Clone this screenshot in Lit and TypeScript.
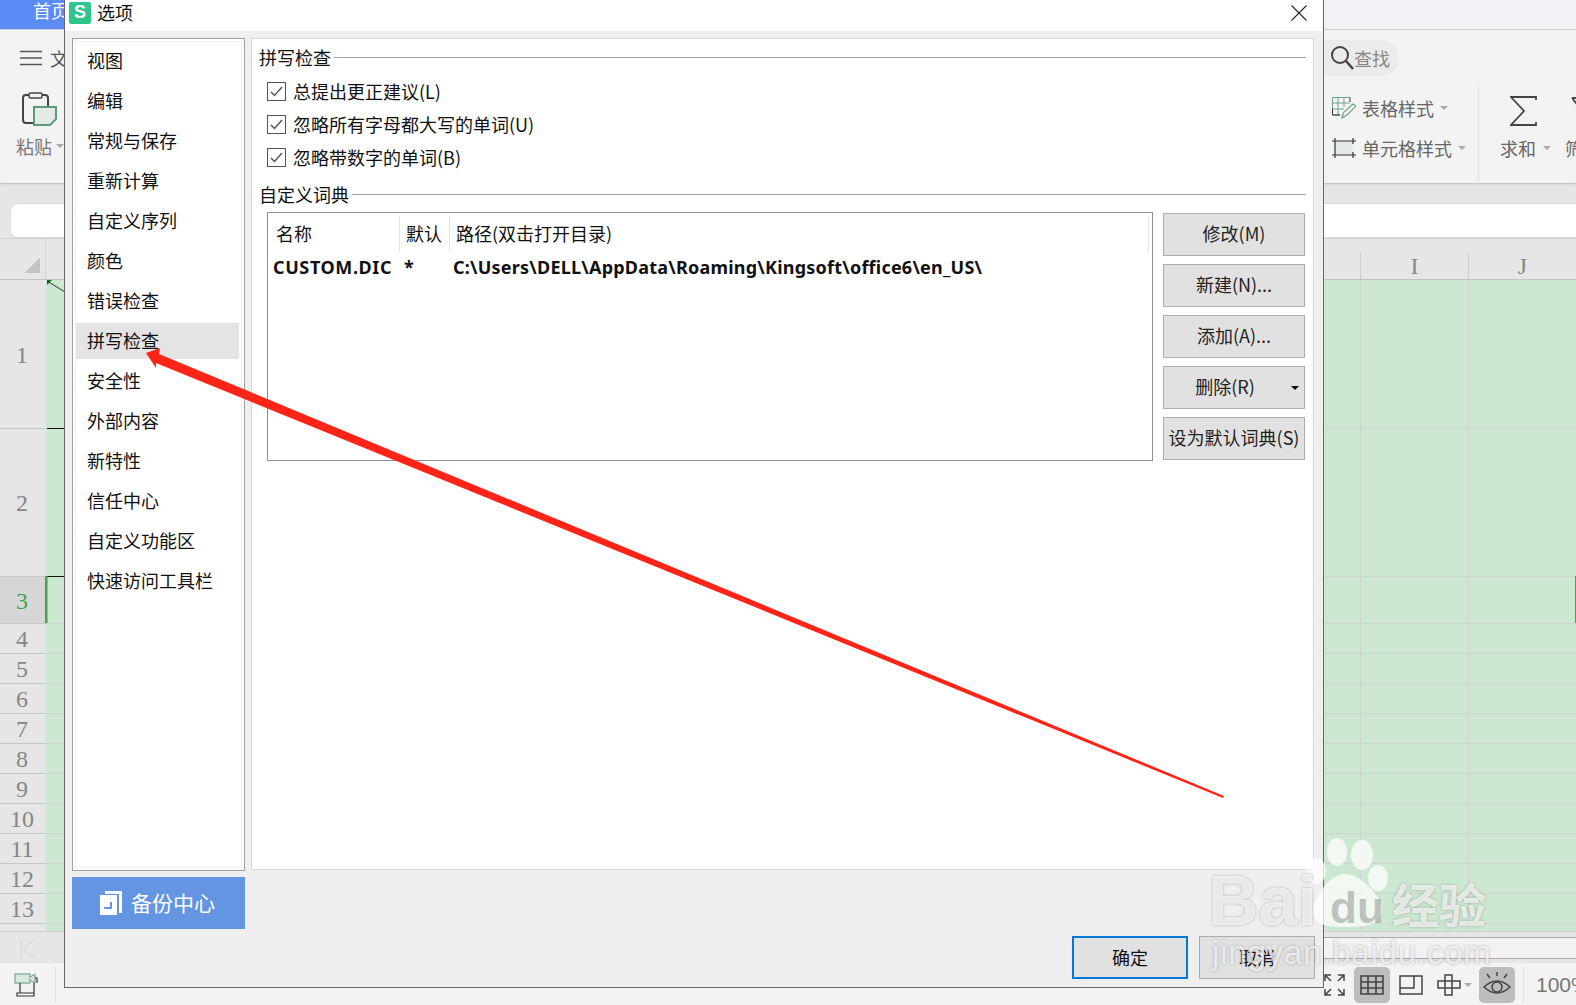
import { LitElement, html, css, svg } from "lit";
import { customElement } from "lit/decorators.js";

const NAV = ["视图","编辑","常规与保存","重新计算","自定义序列","颜色","错误检查","拼写检查","安全性","外部内容","新特性","信任中心","自定义功能区","快速访问工具栏"];
const ROWS: [string, number][] = [["1",149],["2",148],["3",47],["4",30],["5",30],["6",30],["7",30],["8",30],["9",30],["10",30],["11",30],["12",30],["13",30],["",8]];
const CHECKS = ["总提出更正建议(L)","忽略所有字母都大写的单词(U)","忽略带数字的单词(B)"];

@customElement("app-root")
export class AppRoot extends LitElement {
  static styles = css`
    :host { display:block; position:relative; width:1576px; height:1005px; overflow:hidden; background:#f3f3f3;
      font-family:"Noto Sans CJK SC","Liberation Sans",sans-serif; font-size:18px; color:#111; }
    svg { display:block; flex:none; }
    .tabs { height:29px; background:#f0f2f6; border-bottom:1px solid #cfd3e0; display:flex; }
    .home { width:64px; background:#5b8cf5; color:#fff; padding-left:33px; box-sizing:border-box; line-height:21px; overflow:hidden; white-space:nowrap; }
    .ribbon { height:153px; background:#f3f3f3; display:grid; grid-template-columns:64px 1259px 1fr; box-shadow:0 1px 3px rgba(0,0,0,.12); position:relative; }
    .rleft { display:flex; flex-direction:column; padding:20px 0 0 20px; overflow:hidden; }
    .menu { display:flex; align-items:center; gap:8px; height:16px; color:#555; white-space:nowrap; }
    .paste { margin:26px 0 0 2px; }
    .pastelbl { margin:7px 0 0 -4px; display:flex; align-items:center; gap:4px; color:#777; white-space:nowrap; height:22px; }
    .caret { width:0; height:0; border:4px solid transparent; border-top:4px solid #aaa; border-bottom:0; flex:none; }
    .rright { display:flex; flex-direction:column; overflow:hidden; }
    .search { width:76px; height:36px; margin-top:10px; box-sizing:border-box; background:#ebebeb; border-radius:0 18px 18px 0; display:flex; align-items:center; gap:0; padding-left:7px; color:#888; line-height:34px; }
    .rtools { display:flex; margin-top:10px; }
    .styles { width:155px; flex:none; box-sizing:border-box; padding:10px 0 0 9px; display:flex; flex-direction:column; gap:16px; color:#666; }
    .sty { display:flex; align-items:center; gap:6px; height:24px; white-space:nowrap; }
    .rdiv { width:1px; height:95px; background:#e2e2e2; flex:none; }
    .sum { margin-left:21px; width:65px; flex:none; display:flex; flex-direction:column; padding-top:10px; color:#666; }
    .sumlbl { display:flex; align-items:center; gap:7px; margin-top:10px; height:22px; white-space:nowrap; }
    .filter { color:#666; padding-top:10px; flex:none; }
    .filter svg { margin-left:6px; }
    .flt { margin-top:10px; line-height:22px; white-space:nowrap; }
    .sigma { margin-left:10px; }
    .formula { height:55px; background:#e6e6e6; border-top:1px solid #d6d6d6; box-sizing:border-box; padding:19px 0 0 10px; }
    .finput { height:35px; background:#fff; border:1px solid #dcdcdc; border-right:0; border-radius:8px 0 0 8px; box-sizing:border-box; }
    .colhead { height:42px; background:#e6e6e6; border-top:1px solid #d2d2d2; border-bottom:1px solid #c4c4c4; box-sizing:border-box; display:flex; align-items:flex-end; }
    .corner { width:46px; height:41px; box-sizing:border-box; padding:20px 0 0 25px; border-right:1px solid #d4d4d4; }
    .tri { width:15px; height:15px; background:linear-gradient(135deg,transparent 50%,#c4c4c4 50%); }
    .colspace { width:1314px; }
    .col { width:107px; height:27px; border-left:1px solid #cfcfcf; text-align:center; font:24px/28px "Liberation Serif",serif; color:#888; flex:none; }
    .sheet { display:flex; height:651px; }
    .rowhead { width:46px; flex:none; background:#e6e6e6; }
    .rh { border-bottom:1.5px solid #c6c6c6; box-sizing:border-box; display:flex; align-items:center; justify-content:center; padding:2px 2px 0 0; font:24px "Liberation Serif",serif; color:#858585; }
    .rh.sel { background:#d6d6d6; color:#3fa648; }
    .cells { flex:1; background:#cde8d0; position:relative; }
    .cr { box-sizing:border-box; border-bottom:1px solid #d0d4d0; background:linear-gradient(#d2d2d2,#d2d2d2) 1314px 0/1px 100% no-repeat, linear-gradient(#d2d2d2,#d2d2d2) 1422px 0/1px 100% no-repeat; }
    .scroll { height:32px; background:#e6e6e6; border-top:1.5px solid #cfcfcf; box-sizing:border-box; position:relative; }
    .hscroll { margin-left:1323px; height:20px; margin-top:5px; background:#f2f2f2; border-top:1px solid #a8a8a8; border-bottom:1px solid #aaa; }
    .kbar { position:absolute; left:20px; top:7px; }
    .status { height:43px; background:#f3f3f3; display:flex; align-items:center; }
    .stleft { width:56px; flex:none; padding-left:14px; box-sizing:border-box; height:35px; border-right:1px solid #e0e0e0; display:flex; align-items:center; }
    .stright { flex:none; margin-left:1268px; display:flex; align-items:center; height:36px; }
    .full { margin-right:9px; }
    .sbtn { width:36px; height:36px; border-radius:5px; display:flex; align-items:center; justify-content:center; flex:none; }
    .sbtn.on { background:#bdbdbd; }
    .sbtn.lay { margin-left:3px; }
    .sbtn.cross { width:44px; gap:3px; margin-left:3px; }
    .sbtn.eye { margin-left:3px; }
    .pct { color:#777; font:21px "Liberation Sans",sans-serif; margin-left:8px; padding-left:12px; border-left:1px solid #e0e0e0; line-height:35px; white-space:nowrap; }

    .dialog { position:absolute; left:64px; top:0; width:1260px; height:988px; box-sizing:border-box; background:#efefef; border:1.5px solid #666; border-top:0; display:flex; flex-direction:column; }
    .title { height:31px; background:#fff; display:flex; align-items:flex-start; padding:2px 16px 0 4px; box-sizing:border-box; flex:none; }
    .logo { width:22px; height:22px; background:#2dc58a; border-radius:2px; color:#fff; font:bold 18px/21px "Liberation Sans",sans-serif; text-align:center; margin-right:6px; }
    .ttext { flex:1; line-height:20px; }
    .close { margin-top:3px; }
    .main { display:flex; gap:6px; padding:7px 0 0 7px; height:891px; flex:none; }
    .left { width:173px; display:flex; flex-direction:column; gap:6px; flex:none; }
    .nav { height:833px; box-sizing:border-box; background:#fff; border:1.5px solid #a0a0a0; padding:2px; }
    .navin { height:100%; box-sizing:border-box; border:1.5px solid #eee; padding:1px 0 0 0; display:flex; flex-direction:column; gap:4px; }
    .item { height:36px; line-height:35px; padding-left:11px; margin:0 2px 0 0; white-space:nowrap; }
    .item.sel { background:#e4e4e4; }
    .backup { height:52px; background:#6495e2; color:#fff; display:flex; align-items:center; padding:0 0 0 28px; gap:9px; font-size:21px; }
    .backup span { position:relative; top:-1px; }
    .content { width:1063px; height:832px; box-sizing:border-box; background:#fff; border:1px solid #d8d8d8; padding:5px 7px 0 7px; }
    .legend { display:flex; align-items:center; gap:3px; height:26px; white-space:nowrap; }
    .legend i { flex:1; height:1px; background:#a0a0a0; }
    .checks { display:flex; flex-direction:column; gap:7px; padding:8px 0 0 8px; }
    .chk { display:flex; align-items:center; gap:7px; height:26px; white-space:nowrap; }
    .box { width:19px; height:19px; box-sizing:border-box; border:1px solid #555; background:#fff; display:flex; align-items:center; justify-content:center; }
    .dict { margin-top:11px; }
    .dictrow { display:flex; gap:10px; padding:5px 0 0 8px; }
    .list { width:886px; height:249px; box-sizing:border-box; border:1px solid #8a8f96; padding:3px 3px 0 0; background:#fff; }
    .thead { display:grid; grid-template-columns:132px 50px 699px; height:36px; align-items:center; }
    .thead span { height:36px; line-height:34px; box-sizing:border-box; border-right:1px solid #e4e4e4; padding-left:8px; white-space:nowrap; }
    .thead span:nth-child(2) { padding-left:6px; }
    .thead span:nth-child(3) { padding-left:6px; }
    .trow { display:grid; grid-template-columns:132px 50px 699px; height:30px; align-items:center; font:bold 18px "Noto Sans","Noto Sans CJK SC",sans-serif; white-space:nowrap; }
    .trow span { padding-left:5px; letter-spacing:.6px; }
    .trow span:nth-child(2) { padding-left:4px; }
    .trow span:nth-child(3) { padding-left:3px; letter-spacing:.22px; }
    .btns { display:flex; flex-direction:column; gap:8px; margin-top:1px; }
    .btn { width:142px; height:43px; box-sizing:border-box; background:#e1e1e1; border:1.5px solid #adadad; padding-bottom:3px; display:flex; align-items:center; justify-content:center; white-space:nowrap; color:#222; position:relative; }
    .btn.split { padding-right:18px; }
    .drop { position:absolute; right:5px; top:19px; width:0; height:0; border:4px solid transparent; border-top:4px solid #111; border-bottom:0; }
    .foot { display:flex; justify-content:flex-end; gap:11px; padding:7px 8px 0 0; }
    .fbtn { width:116px; height:43px; box-sizing:border-box; background:#e1e1e1; border:1.5px solid #adadad; display:flex; align-items:center; justify-content:center; padding-bottom:2px; }
    .fbtn.def { border:2px solid #0078d7; }

    .overlay { position:absolute; inset:0; pointer-events:none; }
    .wm { position:absolute; color:rgba(255,255,255,.72); text-shadow:0 0 3px rgba(80,80,80,.4); white-space:nowrap; font-family:"Liberation Sans",sans-serif; font-weight:bold; }
    .wm.bai { left:1208px; top:866px; font-size:70px; line-height:70px; }
    .wm.du { left:1330px; top:885px; font-size:44px; line-height:46px; color:rgba(140,150,140,.55); text-shadow:none; }
    .wm.jy { left:1392px; top:873px; font-size:47px; line-height:60px; font-family:"Noto Sans CJK SC",sans-serif; }
    .wm.url { left:1212px; top:933px; font-size:33px; line-height:40px; font-weight:normal; color:rgba(255,255,255,.7); letter-spacing:.8px; }
  `;

  private caret() { return html`<span class="caret"></span>`; }

  render() {
    return html`
      <div class="tabs"><div class="home">首页</div></div>
      <div class="ribbon">
        <div class="rleft">
          <div class="menu">
            <svg width="22" height="16" viewBox="0 0 22 16"><path d="M0 1.500H22M0 8H22M0 14.500H22" stroke="#555" stroke-width="1.500"/></svg>
            <span>文</span>
          </div>
          <svg class="paste" width="36" height="36" viewBox="0 0 36 36">
            <rect x="1" y="3" width="25" height="28" rx="3" fill="none" stroke="#444" stroke-width="2"/>
            <rect x="7" y="1" width="13" height="5" rx="1.500" fill="#f3f3f3" stroke="#444" stroke-width="1.500"/>
            <path d="M12 15H34V27L28 33H12Z" fill="#e4ebe6" stroke="#5f9a78" stroke-width="2"/>
          </svg>
          <div class="pastelbl"><span>粘贴</span>${this.caret()}</div>
        </div>
        <div></div>
        <div class="rright">
          <div class="search">
            <svg width="24" height="26" viewBox="0 0 24 26"><circle cx="10" cy="10" r="8" fill="none" stroke="#444" stroke-width="2"/><path d="M16 16L23 24" stroke="#444" stroke-width="2.500"/></svg>
            <span>查找</span>
          </div>
          <div class="rtools">
            <div class="styles">
              <div class="sty">
                <svg width="24" height="22" viewBox="0 0 24 22"><path d="M.500.500H18M.500.500V18H8M6 .500V18M12 .500V10M.500 6H18M.500 12H12" fill="none" stroke="#6aa585"/><path d="M.500 12V18H8" fill="none" stroke="#333"/><path d="M18 .500V5" stroke="#333"/><path d="M10 20L12 15L21 7L24 9L15 18L10 21Z" fill="none" stroke="#6aa585" stroke-width="1.200"/></svg>
                <span>表格样式</span>${this.caret()}
              </div>
              <div class="sty">
                <svg width="24" height="20" viewBox="0 0 24 20"><rect x="3" y="3" width="18" height="14" fill="#e4ebe6"/><path d="M3 0V20M21 0V6M0 3H24M0 17H24M21 14V20" stroke="#333" stroke-width="1.200" fill="none"/></svg>
                <span>单元格样式</span>${this.caret()}
              </div>
            </div>
            <div class="rdiv"></div>
            <div class="sum">
              <svg class="sigma" width="27" height="31" viewBox="0 0 27 31"><path d="M26 4V1H1L14 15L1 29H26V26" fill="none" stroke="#444" stroke-width="1.800"/></svg>
              <div class="sumlbl"><span>求和</span>${this.caret()}</div>
            </div>
            <div class="filter">
              <svg width="20" height="31" viewBox="0 0 20 31"><path d="M1 2H20M1 2L9 12V20" fill="none" stroke="#444" stroke-width="1.800"/></svg>
              <div class="flt">筛选</div>
            </div>
          </div>
        </div>
      </div>
      <div class="formula"><div class="finput"></div></div>
      <div class="colhead">
        <div class="corner"><div class="tri"></div></div>
        <div class="colspace"></div>
        <div class="col">I</div>
        <div class="col">J</div>
      </div>
      <div class="sheet">
        <div class="rowhead">
          ${ROWS.map(([n,h]) => html`<div class="rh ${n==="3"?"sel":""}" style="height:${h}px">${n}</div>`)}
        </div>
        <div class="cells">
          ${ROWS.map(([n,h]) => html`<div class="cr" style="height:${h}px"></div>`)}
          <svg class="overlay" overflow="visible" width="1530" height="651" viewBox="0 0 1530 651">
            <path d="M1 0H6L1 5Z" fill="#0a7a1a"/>
            <path d="M1 1L19 12" stroke="#333"/>
            <path d="M1 148.500H18M1 296.500H18" stroke="#111" stroke-width="1.200"/>
            <rect x="-1" y="296" width="2.500" height="47" fill="#3fa648"/>
            <rect x="1529" y="296" width="1" height="47" fill="#3fa648"/>
          </svg>
        </div>
      </div>
      <div class="scroll">
        <svg class="kbar" width="16" height="20" viewBox="0 0 16 20"><path d="M1 1V19M14 1L3 10L14 19" fill="none" stroke="#dcdcdc" stroke-width="1.500"/></svg>
        <div class="hscroll"></div>
      </div>
      <div class="status">
        <div class="stleft">
          <svg width="24" height="24" viewBox="0 0 24 24"><rect x="1" y="1" width="15" height="9" fill="#d8e8de" stroke="#5f9a78"/><path d="M16 4L21 1V10L16 7" fill="#d8e8de" stroke="#5f9a78"/><path d="M21 5H23V10M6 10V20M3 20H20V23H3ZM20 10V20" fill="none" stroke="#333" stroke-width="1.200"/></svg>
        </div>
        <div class="stright">
          <svg class="full" width="21" height="22" viewBox="0 0 21 22"><path d="M1 7V1H7M14 1H20V7M1 15V21H7M14 21H20V15M1 1L7 7M20 1L14 7M1 21L7 15M20 21L14 15" fill="none" stroke="#444" stroke-width="1.500"/></svg>
          <div class="sbtn on"><svg width="24" height="20" viewBox="0 0 24 20"><path d="M1 1H23V19H1ZM1 7H23M1 13H23M8 1V19M16 1V19" fill="none" stroke="#444" stroke-width="1.600"/></svg></div>
          <div class="sbtn lay"><svg width="24" height="20" viewBox="0 0 24 20"><path d="M1 1H23V19H1ZM1 13H15V1" fill="none" stroke="#444" stroke-width="1.500"/></svg></div>
          <div class="sbtn cross"><svg width="24" height="22" viewBox="0 0 24 22"><path d="M8 1H15V7H23V14H15V21H8V14H1V7H8ZM8 7H15V14H8Z" fill="none" stroke="#444" stroke-width="1.500"/></svg>${this.caret()}</div>
          <div class="sbtn on eye"><svg width="30" height="26" viewBox="0 0 30 26"><path d="M2 15Q15 3 28 15Q15 27 2 15Z" fill="none" stroke="#444" stroke-width="1.500"/><circle cx="15" cy="15" r="5" fill="none" stroke="#444" stroke-width="1.500"/><path d="M15 0V4M5 2L8 6M25 2L22 6" stroke="#444" stroke-width="1.500"/></svg></div>
          <div class="pct">100%</div>
        </div>
      </div>

      <div class="dialog">
        <div class="title">
          <div class="logo">S</div>
          <div class="ttext">选项</div>
          <svg class="close" width="16" height="16" viewBox="0 0 16 16"><path d="M.500.500L15.500 15.500M15.500.500L.500 15.500" stroke="#222" stroke-width="1.100"/></svg>
        </div>
        <div class="main">
          <div class="left">
            <div class="nav"><div class="navin">
              ${NAV.map(n => html`<div class="item ${n==="拼写检查"?"sel":""}">${n}</div>`)}
            </div></div>
            <div class="backup">
              <svg width="22" height="25" viewBox="0 0 22 25"><path d="M5 0H22V22H19V3H5Z" fill="#fff"/><path d="M0 4H17V24H0Z" fill="#fff"/><path d="M11 11V17H4" fill="none" stroke="#6495e2" stroke-width="2"/></svg>
              <span>备份中心</span>
            </div>
          </div>
          <div class="content">
            <div class="legend"><span>拼写检查</span><i></i></div>
            <div class="checks">
              ${CHECKS.map(c => html`<div class="chk"><span class="box"><svg width="13" height="11" viewBox="0 0 13 11"><path d="M1 6L4.500 9.500L12 1" fill="none" stroke="#555" stroke-width="1.500"/></svg></span><span>${c}</span></div>`)}
            </div>
            <div class="legend dict"><span>自定义词典</span><i></i></div>
            <div class="dictrow">
              <div class="list">
                <div class="thead"><span>名称</span><span>默认</span><span>路径(双击打开目录)</span></div>
                <div class="trow"><span>CUSTOM.DIC</span><span>*</span><span>C:\\Users\\DELL\\AppData\\Roaming\\Kingsoft\\office6\\en_US\\</span></div>
              </div>
              <div class="btns">
                <div class="btn">修改(M)</div>
                <div class="btn">新建(N)...</div>
                <div class="btn">添加(A)...</div>
                <div class="btn split">删除(R)<span class="drop"></span></div>
                <div class="btn">设为默认词典(S)</div>
              </div>
            </div>
          </div>
        </div>
        <div class="foot">
          <div class="fbtn def">确定</div>
          <div class="fbtn">取消</div>
        </div>
      </div>

      <svg class="overlay" width="1576" height="1005" viewBox="0 0 1576 1005">
        <path d="M146 353L160 348L159 354L1224 796L1223 798L156 363L156 368Z" fill="#ff2418"/>
        ${svg`<g fill="#fff" fill-opacity=".72">
          <ellipse cx="1337" cy="852" rx="10" ry="14"/>
          <ellipse cx="1362" cy="855" rx="11" ry="15"/>
          <ellipse cx="1378" cy="878" rx="10" ry="13"/>
          <ellipse cx="1316" cy="871" rx="10" ry="13"/>
          <path d="M1345 874C1328 874 1313 900 1313 912C1313 924 1325 927 1345 927C1368 927 1382 924 1382 910C1382 898 1362 874 1345 874Z"/>
        </g>`}
      </svg>
      <div class="overlay">
        <span class="wm bai">Bai</span>
        <span class="wm du">du</span>
        <span class="wm jy">经验</span>
        <span class="wm url">jingyan.baidu.com</span>
      </div>
    `;
  }
}
